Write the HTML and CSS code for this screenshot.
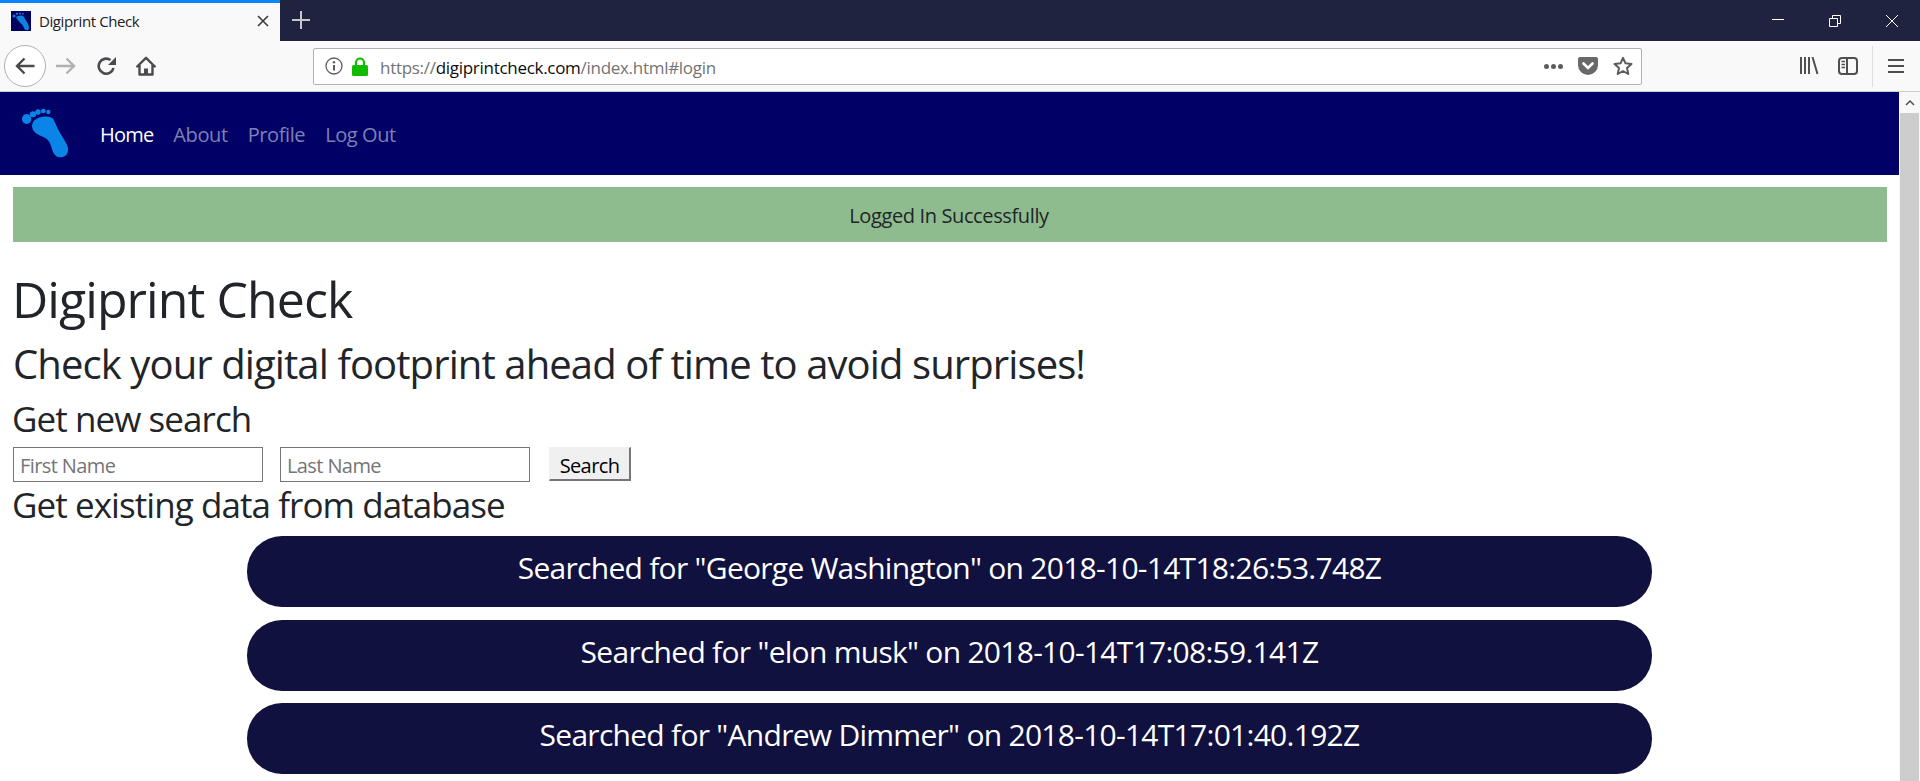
FILE: index.html
```html
<!DOCTYPE html>
<html lang="en">
<head>
    <meta charset="UTF-8">
    <title>Digiprint Check</title>
    <link rel="stylesheet" href="styles.css">
</head>
<body>
    <div class="tabbar">
        <div class="tab">
            <svg class="favicon" viewBox="0 0 20 20">
                <rect width="20" height="20" fill="#00005f"/>
                <path d="M5 6 C8 4 12 4 13 6 C15 10 18 13 18 17 C18 20 14 20 13 17 C12 13 7 11 5 6 Z" fill="#0a84e0"/>
                <circle cx="3" cy="5" r="1.5" fill="#0a84e0"/>
                <circle cx="6" cy="2.8" r="1.1" fill="#0a84e0"/>
                <circle cx="9" cy="2.4" r="1" fill="#0a84e0"/>
                <circle cx="12" cy="2.8" r="0.9" fill="#0a84e0"/>
            </svg>
            <span class="tab-title">Digiprint Check</span>
            <svg class="tab-close" viewBox="0 0 12 12"><path d="M1 1 L11 11 M11 1 L1 11" stroke="#3a3a3a" stroke-width="1.6"/></svg>
        </div>
        <svg class="new-tab" viewBox="0 0 18 18"><path d="M9 0 V18 M0 9 H18" stroke="#c6c7cd" stroke-width="2"/></svg>
        <div class="window-buttons">
            <svg viewBox="0 0 14 14"><path d="M1 5.500 H13" stroke="#fff" stroke-width="1"/></svg>
            <svg viewBox="0 0 14 14"><path d="M1.500 4.500 H9.500 V12.500 H1.500 Z M4.500 4.500 V1.500 H12.500 V9.500 H9.500" stroke="#fff" stroke-width="1" fill="none"/></svg>
            <svg viewBox="0 0 14 14"><path d="M1 1 L13 13 M13 1 L1 13" stroke="#fff" stroke-width="1"/></svg>
        </div>
    </div>

    <div class="toolbar">
        <div class="nav-buttons">
            <div class="back-button">
                <svg viewBox="0 0 20 20" width="20" height="20"><path d="M19.500 10 H2 M9.500 2.500 L2 10 L9.500 17.500" stroke="#4a4a4f" stroke-width="2.400" fill="none"/></svg>
            </div>
            <svg class="tool-icon forward" viewBox="0 0 20 20"><path d="M0 10 H18 M10.500 2.500 L18 10 L10.500 17.500" stroke="#b1b1b3" stroke-width="2.400" fill="none"/></svg>
            <svg class="tool-icon reload" viewBox="0 0 20 20"><path d="M16.500 12 A7.500 7.500 0 1 1 13.500 4" stroke="#4a4a4f" stroke-width="2.600" fill="none"/><path d="M19 1 V9 H11 Z" fill="#4a4a4f"/></svg>
            <svg class="tool-icon home" viewBox="0 0 20 20"><path d="M1.200 10.500 L10 1.800 L18.800 10.500 M3.500 9 V18.500 H16.500 V9" stroke="#4a4a4f" stroke-width="2.400" fill="none" stroke-linejoin="round" stroke-linecap="round"/><path d="M8 18 V12.500 H12 V18 Z" fill="#4a4a4f"/></svg>
        </div>
        <div class="urlbar">
            <svg class="info-icon" viewBox="0 0 18 18"><circle cx="9" cy="9" r="8" stroke="#5c5c5c" stroke-width="1.300" fill="none"/><path d="M9 8 V13.500" stroke="#5c5c5c" stroke-width="2"/><circle cx="9" cy="5.200" r="1.200" fill="#5c5c5c"/></svg>
            <svg class="lock-icon" viewBox="0 0 16 19"><path d="M4 8 V5.500 A4 4 0 0 1 12 5.500 V8" stroke="#12bc00" stroke-width="2.200" fill="none"/><rect y="8" width="16" height="11" rx="1.500" fill="#12bc00"/></svg>
            <div class="url"><span class="url-dim">https://</span>digiprintcheck.com<span class="url-dim">/index.html#login</span></div>
            <div class="dots"><i></i><i></i><i></i></div>
            <svg class="pocket-icon" viewBox="0 0 20 18"><path d="M2 0 H18 A2 2 0 0 1 20 2 V8 A10 10 0 0 1 0 8 V2 A2 2 0 0 1 2 0 Z" fill="#696969"/><path d="M5.500 6.500 L10 11 L14.500 6.500" stroke="#fff" stroke-width="2.600" fill="none" stroke-linecap="round"/></svg>
            <svg class="star-icon" viewBox="0 0 20 20"><path d="M10 1.800 L12.500 7.300 L18.500 8 L14 12 L15.300 18 L10 15 L4.700 18 L6 12 L1.500 8 L7.500 7.300 Z" stroke="#5c5c5c" stroke-width="2" fill="none" stroke-linejoin="round"/></svg>
        </div>
        <div class="toolbar-right">
            <svg class="library-icon" viewBox="0 0 20 18"><path d="M2 0 V17 M6 0 V17 M10 0 V17 M13.500 0 L18.500 17" stroke="#4f4f4f" stroke-width="2"/></svg>
            <svg class="sidebar-icon" viewBox="0 0 20 18"><rect x="1" y="1" width="18" height="16" rx="3" stroke="#4f4f4f" stroke-width="2" fill="none"/><path d="M9 1 V17" stroke="#4f4f4f" stroke-width="2"/><path d="M3.500 4.500 H7 M3.500 7.500 H7 M3.500 10.500 H7" stroke="#4f4f4f" stroke-width="1.500"/></svg>
            <div class="toolbar-sep"></div>
            <svg class="menu-icon" viewBox="0 0 16 16"><path d="M0 2 H16 M0 8 H16 M0 14 H16" stroke="#4f4f4f" stroke-width="2"/></svg>
        </div>
    </div>

    <div class="viewport">
        <div class="page">
            <nav class="navbar">
                <svg class="brand" viewBox="0 0 210 210">
                    <path d="M66 92 C68 74 84 66 100 65 C116 64 128 66 133 78 C140 96 150 114 160 130 C168 144 176 156 174 168 C172 184 156 189 145 186 C132 182 128 170 124 156 C120 142 114 132 100 126 C82 118 66 110 66 92 Z" fill="#0a84e6"/>
                    <ellipse cx="50" cy="72" rx="14" ry="15" fill="#0a84e6"/>
                    <ellipse cx="69" cy="58" rx="9.500" ry="9" fill="#0a84e6"/>
                    <ellipse cx="84" cy="51" rx="8" ry="8" fill="#0a84e6"/>
                    <ellipse cx="100" cy="48" rx="7" ry="7" fill="#0a84e6"/>
                    <ellipse cx="115" cy="51" rx="6.500" ry="6.500" fill="#0a84e6"/>
                </svg>
                <a class="nav-link active">Home</a>
                <a class="nav-link">About</a>
                <a class="nav-link">Profile</a>
                <a class="nav-link">Log Out</a>
            </nav>
            <div class="content">
                <div class="alert">Logged In Successfully</div>
                <h1>Digiprint Check</h1>
                <h2>Check your digital footprint ahead of time to avoid surprises!</h2>
                <h3>Get new search</h3>
                <form class="search-form">
                    <input type="text" placeholder="First Name">
                    <input type="text" placeholder="Last Name">
                    <button type="button">Search</button>
                </form>
                <h3>Get existing data from database</h3>
                <div class="history">
                    <div class="pill">Searched for "George Washington" on 2018-10-14T18:26:53.748Z</div>
                    <div class="pill">Searched for "elon musk" on 2018-10-14T17:08:59.141Z</div>
                    <div class="pill">Searched for "Andrew Dimmer" on 2018-10-14T17:01:40.192Z</div>
                </div>
            </div>
        </div>
        <div class="scrollbar">
            <div class="scroll-up"><svg viewBox="0 0 10 6" width="10" height="6"><path d="M1 5 L5 1 L9 5" stroke="#505050" stroke-width="1.500" fill="none"/></svg></div>
            <div class="scroll-thumb"></div>
        </div>
    </div>
</body>
</html>
```

FILE: styles.css
```css
html, body {
    height: 100%;
}

body {
    margin: 0;
    display: flex;
    flex-direction: column;
    overflow: hidden;
    font-family: "Open Sans", sans-serif;
    color: #212529;
    background: #fff;
}

/* browser chrome */
.tabbar {
    height: 41px;
    display: flex;
    align-items: stretch;
    background: #202340;
    flex-shrink: 0;
}

.tab {
    width: 280px;
    box-sizing: border-box;
    border-top: 3px solid #0a84ff;
    background: #f9f9fa;
    display: flex;
    align-items: center;
    padding: 0 10px 2px 11px;
}

.favicon {
    width: 20px;
    height: 20px;
}

.tab-title {
    margin-left: 8px;
    flex: 1;
    font-size: 15px;
    letter-spacing: -0.4px;
    color: #222;
}

.tab-close {
    width: 12px;
    height: 12px;
    margin-right: 1px;
}

.new-tab {
    width: 18px;
    height: 18px;
    margin: 11px 0 0 12px;
}

.window-buttons {
    margin-left: auto;
    display: flex;
    gap: 43px;
    padding: 14px 21px 0 0;
}

.window-buttons svg {
    width: 14px;
    height: 14px;
}

.toolbar {
    height: 51px;
    box-sizing: border-box;
    border-bottom: 1px solid #ccc;
    background: #f9f9fa;
    display: flex;
    align-items: center;
    flex-shrink: 0;
}

.nav-buttons {
    width: 313px;
    display: flex;
    align-items: center;
    padding-left: 4px;
    box-sizing: border-box;
}

.back-button {
    width: 42px;
    height: 42px;
    box-sizing: border-box;
    border: 1px solid #b1b1b3;
    border-radius: 50%;
    background: #fff;
    display: flex;
    align-items: center;
    justify-content: center;
}

.tool-icon {
    width: 20px;
    height: 20px;
}

.forward {
    margin-left: 10px;
}

.reload {
    margin-left: 21px;
}

.home {
    margin-left: 19px;
}

.urlbar {
    width: 1329px;
    height: 37px;
    box-sizing: border-box;
    border: 1px solid #b1b1b3;
    border-radius: 2px;
    background: #fff;
    display: flex;
    align-items: center;
    padding: 0 8px 0 11px;
}

.info-icon {
    width: 18px;
    height: 18px;
}

.lock-icon {
    width: 16px;
    height: 19px;
    margin-left: 9px;
}

.url {
    margin-left: 12px;
    padding-top: 2px;
    flex: 1;
    font-size: 17px;
    letter-spacing: -0.29px;
    color: #0c0c0d;
}

.url-dim {
    color: #737373;
}

.dots {
    display: flex;
    gap: 2px;
}

.dots i {
    width: 5px;
    height: 5px;
    border-radius: 50%;
    background: #5c5c5c;
}

.pocket-icon {
    width: 20px;
    height: 18px;
    margin-left: 15px;
}

.star-icon {
    width: 20px;
    height: 20px;
    margin-left: 15px;
}

.toolbar-right {
    flex: 1;
    display: flex;
    align-items: center;
    padding-left: 157px;
}

.library-icon {
    width: 20px;
    height: 18px;
}

.sidebar-icon {
    width: 20px;
    height: 18px;
    margin-left: 19px;
}

.toolbar-sep {
    width: 1px;
    height: 41px;
    margin-left: 14px;
    background: #ddd;
}

.menu-icon {
    width: 16px;
    height: 16px;
    margin-left: 15px;
}

/* page */
.viewport {
    flex: 1;
    min-height: 0;
    display: flex;
}

.page {
    flex: 1;
    min-width: 0;
    overflow: hidden;
}

.scrollbar {
    width: 21px;
    display: flex;
    flex-direction: column;
    background: #f8f8f8;
}

.scroll-up {
    height: 21px;
    display: flex;
    align-items: center;
    justify-content: center;
}

.scroll-thumb {
    flex: 1;
    margin: 0 1px;
    background: #cdcdcd;
}

.navbar {
    height: 83px;
    background: #000066;
    display: flex;
    align-items: center;
    padding-left: 10px;
}

.brand {
    width: 70px;
    height: 70px;
    align-self: flex-start;
    margin: 3px 10px 0 0;
}

.nav-link {
    padding: 2px 10px 0;
    font-size: 20px;
    letter-spacing: -0.4px;
    color: rgba(255, 255, 255, 0.5);
}

.nav-link.active {
    letter-spacing: -0.8px;
    color: #fff;
}

.content {
    padding: 12px 12px 0 13px;
}

.alert {
    height: 55px;
    box-sizing: border-box;
    padding: 2px 2px 0 0;
    background: #8fbc8f;
    display: flex;
    align-items: center;
    justify-content: center;
    font-size: 20px;
    letter-spacing: -0.37px;
}

h1, h2, h3 {
    margin: 0;
    font-weight: 400;
}

h1 {
    margin: 27px 0 0 -1px;
    font-size: 50px;
    line-height: 60px;
    letter-spacing: -0.93px;
}

h2 {
    margin: 11px 0 10px;
    font-size: 40px;
    line-height: 48px;
    letter-spacing: -0.9px;
}

h3 {
    margin-left: -1px;
    font-size: 35px;
    line-height: 42px;
    letter-spacing: -0.93px;
}

.search-form {
    display: flex;
    align-items: flex-start;
    gap: 17px;
    margin: 7px 0 2px;
}

.search-form input {
    width: 250px;
    height: 35px;
    box-sizing: border-box;
    border: 1px solid #767676;
    padding: 2px 6px 0;
    font: 20px "Open Sans", sans-serif;
    letter-spacing: -0.6px;
}

.search-form input::placeholder {
    color: #757575;
}

.search-form button {
    width: 82px;
    height: 34px;
    margin-left: 2px;
    padding: 3px 0 0;
    border-style: solid;
    border-width: 1px 2px 2px 1px;
    border-color: #f0f0f0 #767676 #767676 #f0f0f0;
    background: #f0f0f0;
    font: 20px "Open Sans", sans-serif;
    letter-spacing: -0.6px;
    color: #000;
}

.history {
    display: flex;
    flex-direction: column;
    align-items: center;
    gap: 12.5px;
    margin: 10px 1px 0 0;
}

.pill {
    width: 1405px;
    height: 71px;
    box-sizing: border-box;
    padding-bottom: 8px;
    border-radius: 35px;
    background: #111140;
    display: flex;
    align-items: center;
    justify-content: center;
    font-size: 30px;
    letter-spacing: -0.72px;
    color: #fff;
}
```
